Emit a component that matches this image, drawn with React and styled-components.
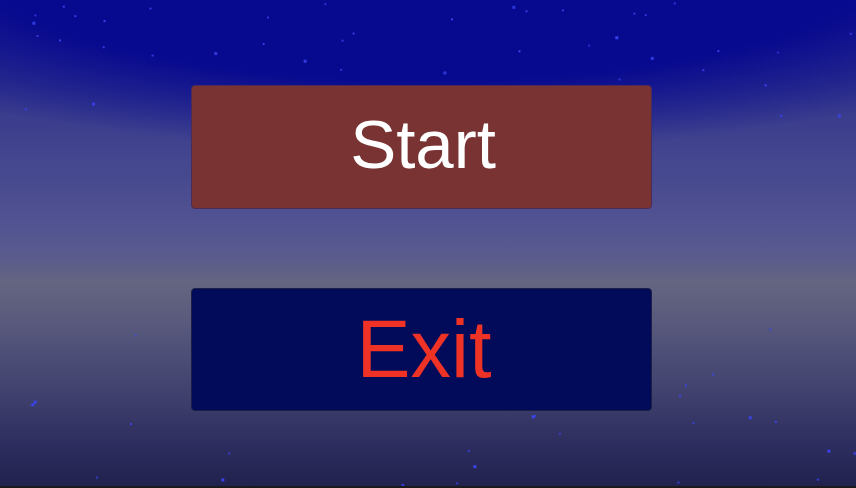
import React from "react";
import styled, { createGlobalStyle } from "styled-components";

const GlobalStyle = createGlobalStyle`
  html, body {
    margin: 0;
    padding: 0;
    width: 856px;
    height: 488px;
    overflow: hidden;
    font-family: "Liberation Sans", Arial, sans-serif;
  }
`;

/*
The menu screen. The sky is two gradients stacked: the dark
dome at the top and the horizon band lower down.
 */
const Screen = styled.div`
  position: relative;
  width: 856px;
  height: 486px;
  display: flex;
  flex-direction: column;
  align-items: center;
  gap: 79px;
  padding: 85px 14px 0 0;
  box-sizing: border-box;
  overflow: hidden;
  background:
    radial-gradient(ellipse 720px 190px at 50% -8%, #07098f 0%, #07098f 62%, rgba(7, 9, 143, 0) 100%),
    linear-gradient(
      to bottom,
      #2a2b8b 0%,
      #35378c 18%,
      #45478f 34%,
      #515392 46%,
      #5a5b8c 53%,
      #646581 58%,
      #5e5f7e 63%,
      #4f5078 72%,
      #3e3f6c 82%,
      #2c2c5e 92%,
      #22224f 100%
    );
`;

const BottomBar = styled.div`
  width: 856px;
  height: 2px;
  background: #1b1b1e;
`;

const Stars = styled.svg`
  position: absolute;
  inset: 0;
  pointer-events: none;
`;

const MenuButton = styled.button`
  position: relative;
  width: 461px;
  height: ${(p) => p.$h}px;
  display: flex;
  align-items: center;
  justify-content: center;
  margin: 0;
  padding: 0;
  border: 1px solid ${(p) => p.$edge};
  border-radius: 4px;
  background: ${(p) => p.$bg};
  color: ${(p) => p.$fg};
  font-family: "Liberation Sans", Arial, sans-serif;
  font-size: ${(p) => p.$size}px;
  line-height: 1;
  cursor: pointer;
`;

const Label = styled.span`
  display: block;
  transform: translate(${(p) => p.$dx}px, ${(p) => p.$dy}px);
`;

// small seeded random, so the stars stay put between renders
function makeStars() {
  let seed = 23;
  const rnd = () => {
    seed = (seed * 16807) % 2147483647;
    return seed / 2147483647;
  };
  const stars = [];
  for (let i = 0; i < 80; i++) {
    const y = rnd() < 0.55 ? rnd() * 125 : 310 + rnd() * 176;
    stars.push({ x: rnd() * 856, y, s: rnd() < 0.35 ? 2 : 1, o: 0.65 + rnd() * 0.35 });
  }
  return stars;
}

const stars = makeStars();

export default function App() {
  return (
    <>
      <GlobalStyle />
      <Screen>
        <Stars width="856" height="486">
          {stars.map((st, i) => (
            <rect key={i} x={st.x} y={st.y} width={st.s + 1} height={st.s + 1} fill="#3a44f0" opacity={st.o} />
          ))}
        </Stars>
        <MenuButton $h={124} $bg="#7a3333" $fg="#ffffff" $edge="#4c2b58" $size={69}>
          <Label $dx={2} $dy={-3}>Start</Label>
        </MenuButton>
        <MenuButton $h={123} $bg="#020b5a" $fg="#ee3326" $edge="#1c1f46" $size={81}>
          <Label $dx={3} $dy={0}>Exit</Label>
        </MenuButton>
      </Screen>
      <BottomBar />
    </>
  );
}
